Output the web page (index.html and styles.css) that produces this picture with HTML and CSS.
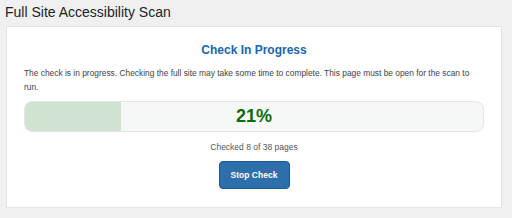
FILE: index.html
```html
<!DOCTYPE html>
<html lang="en">
<head>
    <meta charset="UTF-8">
    <meta name="viewport" content="width=device-width, initial-scale=1.0">
    <title>Full Site Accessibility Scan</title>
    <link rel="stylesheet" href="styles.css">
</head>
<body>
    <h1>Full Site Accessibility Scan</h1>

    <div class="scan-card">
        <h2>Check In Progress</h2>
        <p class="scan-note">The check is in progress. Checking the full site may take some time to complete. This page must be open for the scan to run.</p>

        <div class="progress">
            <div class="progress-fill" style="width: 21%"></div>
            <span class="progress-label">21%</span>
        </div>

        <p class="progress-count">Checked 8 of 38 pages</p>

        <div class="actions">
            <button class="stop-btn" type="button">Stop Check</button>
        </div>
    </div>
</body>
</html>
```

FILE: styles.css
```css
body {
    font-family: "Liberation Sans", Arial, sans-serif;
    background-color: #f0f0f1;
    color: #3c434a;
    margin: 0;
    padding: 0 10px 0 6px;
}
h1 {
    font-size: 14px;
    font-weight: normal;
    color: #1d2327;
    margin: 0 0 4px -1px;
    padding-top: 2px;
    line-height: 20px;
}
.scan-card {
    background-color: #fff;
    border: 1px solid #e2e4e7;
    padding: 15px 17px 18px;
}
.scan-card h2 {
    text-align: center;
    color: #2165a8;
    font-size: 12px;
    margin: 0 0 8px;
    line-height: 16px;
}
.scan-note {
    font-size: 8.4px;
    line-height: 14px;
    margin: 0 0 7px;
    padding-right: 6px;
}
.progress {
    position: relative;
    height: 29px;
    background-color: #f6f7f7;
    border: 1px solid #e3e5e8;
    border-radius: 8px;
    overflow: hidden;
}
.progress-fill {
    height: 100%;
    background-color: #cfe3d0;
}
.progress-label {
    position: absolute;
    left: 0;
    right: 0;
    top: 0;
    line-height: 29px;
    text-align: center;
    font-size: 18px;
    font-weight: bold;
    color: #0b6b0b;
}
.progress-count {
    text-align: center;
    font-size: 8.5px;
    color: #50575e;
    margin: 9px 0 8px;
    line-height: 12px;
}
.actions {
    text-align: center;
    height: 28px;
}
.stop-btn {
    font-family: inherit;
    font-size: 8.5px;
    font-weight: bold;
    color: #fff;
    background-color: #2d6fab;
    border: 1px solid #1c5a91;
    border-radius: 4px;
    width: 71px;
    height: 28px;
    padding: 0;
    vertical-align: top;
}
```
